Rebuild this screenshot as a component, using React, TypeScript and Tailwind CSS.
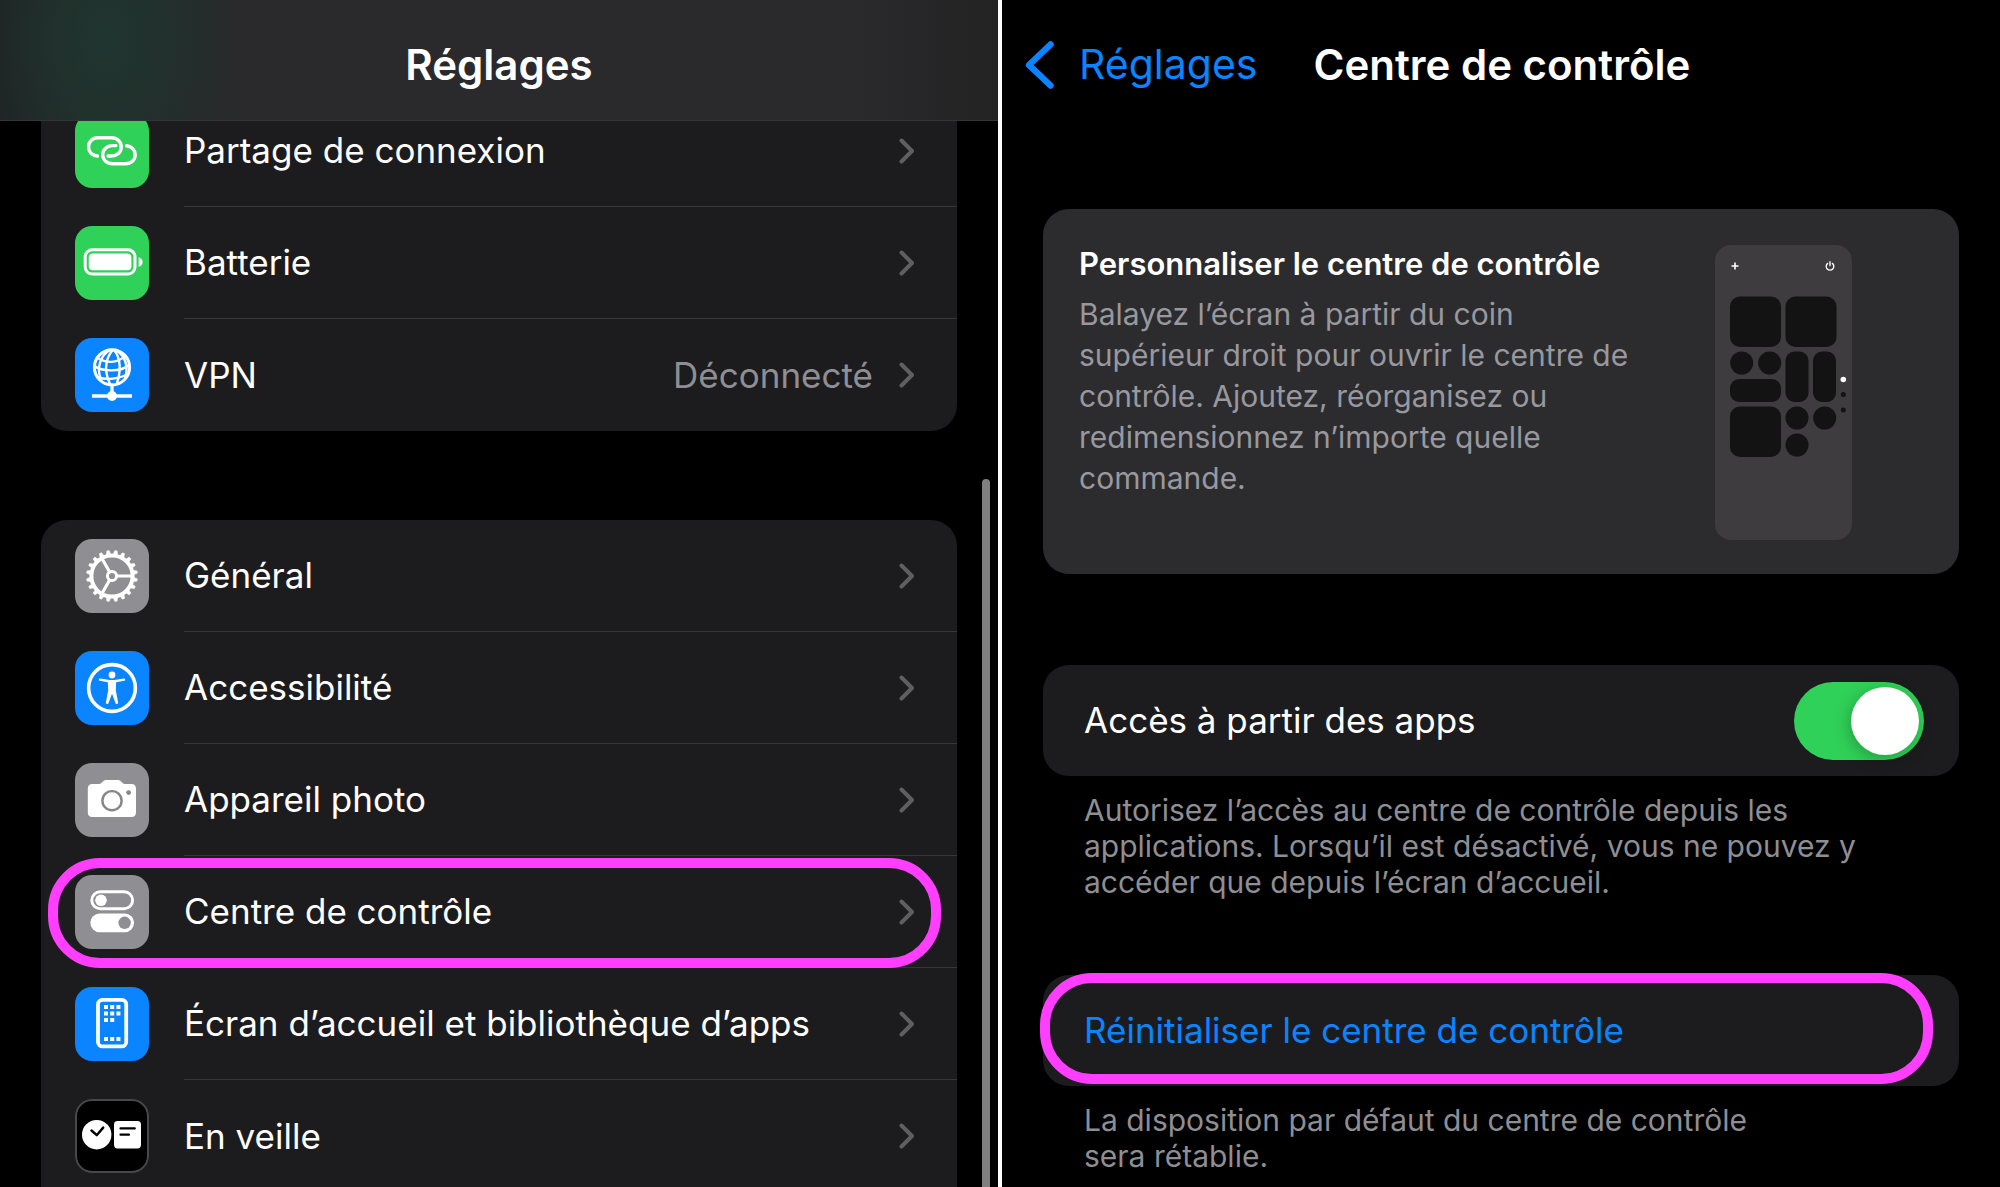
import React from 'react';

type RowProps = {
  icon: React.ReactNode;
  tile: string;
  label: string;
  value?: string;
  last?: boolean;
  highlighted?: boolean;
};

function Chevron() {
  return <svg className="w-4 h-[26px] shrink-0 text-[#5f5f63]" viewBox="0 0 16 26" fill="none" stroke="currentColor" strokeWidth="4" strokeLinecap="round" strokeLinejoin="round" aria-hidden="true">
      <path d="M2.5 2.5 L13 13 L2.5 23.5" />
    </svg>;
}

function Glyph({ children }: { children: React.ReactNode }) {
  return <svg className="w-full h-full" viewBox="0 0 74 74" fill="none" stroke="white" strokeLinecap="round" strokeLinejoin="round" aria-hidden="true">
      {children}
    </svg>;
}

function HotspotIcon() {
  return <Glyph>
      <g strokeWidth="3.4">
        <path d="M22.5 42 C17 41.5 13.6 38 13.6 33 C13.6 27.5 17.5 23.8 23 23.8 H36.5 C42 23.8 46.2 27.5 46.2 33 C46.2 38.4 42 42 36.5 42 H33" />
        <path d="M41 31.6 H37.5 C32 31.6 27.7 35.4 27.7 40.8 C27.7 46 32 49.8 37.5 49.8 H50.5 C56 49.8 60.2 46 60.2 40.8 C60.2 36 56.6 32.2 51.5 31.8" />
      </g>
    </Glyph>;
}

function BatteryIcon() {
  return <Glyph>
      <rect x="10.2" y="23.8" width="49.8" height="24.2" rx="7" strokeWidth="3" />
      <rect x="13.8" y="27.5" width="42.6" height="16.8" rx="4" fill="white" stroke="none" />
      <path d="M63.6 31.2 C66 31.8 67.6 33.6 67.6 36 C67.6 38.4 66 40.2 63.6 40.8 Z" fill="white" stroke="none" />
    </Glyph>;
}

function VpnIcon() {
  return <Glyph>
      <circle cx="37" cy="29.3" r="17.6" strokeWidth="3" />
      <g strokeWidth="2.4">
        <path d="M38 12 C33 17 27 29 35 46" />
        <path d="M39 12 C46 20 46 33 42 45" />
        <path d="M35 12 C26 17 21 29 26 42" />
        <path d="M41 12 C50 18 54 28 50 40" />
        <path d="M23 20 C30 25 42 26 50 18" />
        <path d="M19.5 28 C27 34 46 34 54 27" />
        <path d="M22 39 C31 42 42 41 51 37" />
      </g>
      <path d="M37 47 V56" strokeWidth="3.2" />
      <path d="M17 58 H57" strokeWidth="3.6" strokeLinecap="butt" />
      <circle cx="37" cy="58" r="5" fill="white" stroke="none" />
    </Glyph>;
}

function GearIcon() {
  const teeth = Array.from({ length: 20 }, (_, i) => i * 18 + 9);
  return <Glyph>
      <circle cx="37" cy="37" r="20.6" strokeWidth="4" />
      {teeth.map(angle => <path key={angle} d="M35 15.5 L35.9 11.6 H38.1 L39 15.5 Z" fill="white" strokeWidth="0.8" transform={`rotate(${angle} 37 37)`} />)}
      <circle cx="37" cy="37" r="4.6" strokeWidth="3" />
      <path d="M42 37 H57 M34.5 32.7 L26.8 19.3 M34.5 41.3 L26.8 54.7" strokeWidth="3.2" />
    </Glyph>;
}

function AccessibilityIcon() {
  return <Glyph>
      <circle cx="37" cy="37" r="23.4" strokeWidth="3.6" />
      <circle cx="37" cy="24" r="3.4" fill="white" stroke="none" />
      <path d="M25 28.6 L34.5 30.2 H39.5 L49 28.6" strokeWidth="2.4" />
      <path d="M33.6 30 H40.4 L40 39.5 L42.4 52 L41.4 52.2 L37.4 41.5 H36.6 L32.6 52.2 L31.6 52 L34 39.5 Z" fill="white" strokeWidth="1.6" />
    </Glyph>;
}

function CameraIcon() {
  return <Glyph>
      <path d="M17.2 21 H24 C27 21 27.5 17 31 17 H43 C46.5 17 47 21 50 21 H56.6 C59.4 21 61 22.8 61 25.6 V49.4 C61 52.2 59.4 54 56.6 54 H17.2 C14.4 54 12.8 52.2 12.8 49.4 V25.6 C12.8 22.8 14.4 21 17.2 21 Z" fill="white" stroke="none" />
      <circle cx="37" cy="37.7" r="9.6" stroke="#85858a" strokeWidth="2.4" />
      <circle cx="53.6" cy="29.6" r="2.4" fill="#85858a" stroke="none" />
    </Glyph>;
}

function SwitchesIcon() {
  return <Glyph>
      <rect x="16.8" y="16.8" width="40.8" height="17" rx="8.5" strokeWidth="3" />
      <circle cx="26" cy="25.3" r="5.8" fill="white" stroke="none" />
      <rect x="15.3" y="38.4" width="43.8" height="18.8" rx="9.4" fill="white" stroke="none" />
      <circle cx="49.6" cy="47.8" r="6.2" fill="#8e8e93" stroke="none" />
    </Glyph>;
}

function HomeScreenIcon() {
  const dots = [[29, 18], [35.2, 18], [41.4, 18], [29, 24.5], [35.2, 24.5], [41.4, 24.5], [29, 31], [35.2, 31], [29, 50], [35.2, 50], [41.4, 50]];
  return <Glyph>
      <rect x="23" y="12.8" width="28.2" height="46.6" rx="4.5" strokeWidth="3.8" />
      {dots.map(([x, y]) => <rect key={`${x}-${y}`} x={x} y={y} width="4" height="4" fill="white" stroke="none" />)}
    </Glyph>;
}

function StandbyIcon() {
  return <Glyph>
      <circle cx="21.7" cy="35.7" r="14.7" fill="white" stroke="none" />
      <path d="M16.5 31.5 L21.7 36.2 L28.2 28.6" stroke="black" strokeWidth="2.4" />
      <rect x="39" y="22" width="27" height="27.4" rx="3.6" fill="white" stroke="none" />
      <path d="M45.5 29.4 H59.8 M45.5 35.7 H54" stroke="black" strokeWidth="2.2" />
    </Glyph>;
}

function Row({ icon, tile, label, value, last, highlighted }: RowProps) {
  return <li className="relative">
      <a href="#" className="flex items-stretch h-28 pl-[34px]">
        <span className="flex items-center pr-[35px]">
          <span className={`block w-[74px] h-[74px] rounded-[17px] overflow-hidden ${tile}`}>{icon}</span>
        </span>
        <span className={`flex flex-1 items-center pr-[42px] ${last ? '' : 'border-b border-[#363638]'}`}>
          <span className="flex-1 text-[35px]">{label}</span>
          {value && <span className="mr-[26px] text-[35px] text-[#8e8e93]">{value}</span>}
          <Chevron />
        </span>
      </a>
      {highlighted && <span className="absolute top-[2px] bottom-0 left-[7px] right-4 rounded-[52px] border-[10px] border-[#ff3eff] pointer-events-none" />}
    </li>;
}

function SettingsPanel() {
  return <section className="relative flex-1 min-w-0 overflow-hidden">
      <header className="relative z-10 h-[121px] flex items-center justify-center pt-2 border-b border-[#343436] bg-[radial-gradient(ellipse_130px_200px_at_105px_40px,#20352f_0%,#20352f99_50%,#20352f00_100%),linear-gradient(90deg,#1f2323_0%,#232826_10%,#2a2a2c_25%,#2a2a2c_85%,#232324_100%)]">
        <h1 className="text-[42px] font-semibold">Réglages</h1>
      </header>
      <ul className="-mt-[26px] mx-[41px] rounded-b-[26px] bg-[#1c1c1e]">
        <Row icon={<HotspotIcon />} tile="bg-[#30d158]" label="Partage de connexion" />
        <Row icon={<BatteryIcon />} tile="bg-[#30d158]" label="Batterie" />
        <Row icon={<VpnIcon />} tile="bg-[#0a84ff]" label="VPN" value="Déconnecté" last />
      </ul>
      <ul className="mt-[89px] mx-[41px] rounded-t-[26px] bg-[#1c1c1e]">
        <Row icon={<GearIcon />} tile="bg-[#8e8e93]" label="Général" />
        <Row icon={<AccessibilityIcon />} tile="bg-[#0a84ff]" label="Accessibilité" />
        <Row icon={<CameraIcon />} tile="bg-[#8e8e93]" label="Appareil photo" />
        <Row icon={<SwitchesIcon />} tile="bg-[#8e8e93]" label="Centre de contrôle" highlighted />
        <Row icon={<HomeScreenIcon />} tile="bg-[#0a84ff]" label="Écran d’accueil et bibliothèque d’apps" />
        <Row icon={<StandbyIcon />} tile="bg-black ring-2 ring-inset ring-[#48484a]" label="En veille" last />
      </ul>
      {/* scroll indicator */}
      <div className="absolute top-[479px] -bottom-2 right-2 w-2 rounded-full bg-[#808080]" />
    </section>;
}

function PhonePreview() {
  return <svg className="w-[137px] h-[295px] shrink-0" viewBox="0 0 137 295" fill="#131313" aria-hidden="true">
      <rect width="137" height="295" rx="16" fill="#3e3c3e" />
      <path d="M16.5 21 H23.5 M20 17.5 V24.5" stroke="white" strokeWidth="1.6" />
      <path d="M112.6 18.4 A3.8 3.8 0 1 0 117.4 18.4 M115 16.8 V20.6" fill="none" stroke="white" strokeWidth="1.4" strokeLinecap="round" />
      <rect x="15" y="51.5" width="51" height="50.5" rx="10" />
      <rect x="70.5" y="51.5" width="51" height="50.5" rx="10" />
      <circle cx="26.7" cy="118" r="11.5" />
      <circle cx="54.7" cy="118" r="11.5" />
      <rect x="15" y="134" width="51" height="23" rx="9" />
      <rect x="70.5" y="106.5" width="23" height="50.5" rx="9" />
      <rect x="98" y="106.5" width="23" height="50.5" rx="9" />
      <rect x="15" y="161.5" width="51" height="50.5" rx="10" />
      <circle cx="82" cy="173" r="11.5" />
      <circle cx="109.7" cy="173" r="11.5" />
      <circle cx="82" cy="200" r="11.5" />
      <circle cx="128.3" cy="134.5" r="2.8" fill="white" />
      <circle cx="128.3" cy="149.5" r="2.5" />
      <circle cx="128.3" cy="165" r="2.5" />
    </svg>;
}

function ControlCenterPanel() {
  return <section className="flex-1 min-w-0 overflow-hidden">
      <header className="h-[121px] flex items-center pt-2 pl-[23px]">
        <a href="#" className="flex items-center text-[#0a84ff]">
          <svg className="w-[29px] h-12 mr-[25px]" viewBox="0 0 29 48" fill="none" stroke="currentColor" strokeWidth="6.4" strokeLinecap="round" strokeLinejoin="round" aria-hidden="true">
            <path d="M25.5 3.5 L4 24 L25.5 44.5" />
          </svg>
          <span className="text-[41px]">Réglages</span>
        </a>
        <h1 className="ml-[56px] text-[42px] font-semibold whitespace-nowrap">Centre de contrôle</h1>
      </header>
      <div className="mx-[41px] mt-[88px]">
        <div className="flex items-start justify-between min-h-[365px] rounded-[26px] bg-[#2c2c2e] pt-9 pl-9 pr-[107px]">
          <div className="max-w-[575px]">
            <h2 className="text-[31px] leading-[38px] font-semibold whitespace-nowrap">Personnaliser le centre de contrôle</h2>
            <p className="mt-[11px] text-[30px] leading-[41px] text-[#98989f]">
              Balayez l’écran à partir du coin supérieur droit pour ouvrir le centre de contrôle. Ajoutez, réorganisez ou redimensionnez n’importe quelle commande.
            </p>
          </div>
          <PhonePreview />
        </div>
        <label className="mt-[91px] h-[111px] flex items-center justify-between rounded-[26px] bg-[#1c1c1e] pl-[41px] pr-[35px]">
          <span className="text-[35px]">Accès à partir des apps</span>
          <input type="checkbox" defaultChecked className="appearance-none w-[130px] h-[78px] rounded-full bg-[#48484a] checked:bg-[#30d158] flex items-center px-[5px] checked:justify-end before:block before:w-[68px] before:h-[68px] before:rounded-full before:bg-white before:shadow-[-2px_4px_16px_rgba(0,0,0,0.25)]" />
        </label>
        <p className="mt-4 ml-[41px] max-w-[830px] text-[30px] leading-9 text-[#8e8e93]">
          Autorisez l’accès au centre de contrôle depuis les applications. Lorsqu’il est désactivé, vous ne pouvez y accéder que depuis l’écran d’accueil.
        </p>
        <div className="relative mt-[75px]">
          <button type="button" className="w-full h-[111px] rounded-[26px] bg-[#1c1c1e] pl-[41px] text-left text-[35px] text-[#0a84ff]">Réinitialiser le centre de contrôle</button>
          <span className="absolute -top-[2px] bottom-[2px] -left-[3px] right-[26px] rounded-[52px] border-[10px] border-[#ff3eff] pointer-events-none" />
        </div>
        <p className="mt-4 ml-[41px] text-[30px] leading-9 text-[#8e8e93]">
          La disposition par défaut du centre de contrôle<br />sera rétablie.
        </p>
      </div>
    </section>;
}

export default function App() {
  return <main className="flex h-screen overflow-hidden bg-black text-white font-['Inter',sans-serif]">
      <SettingsPanel />
      <div className="w-1 shrink-0 bg-white" />
      <ControlCenterPanel />
    </main>;
}
